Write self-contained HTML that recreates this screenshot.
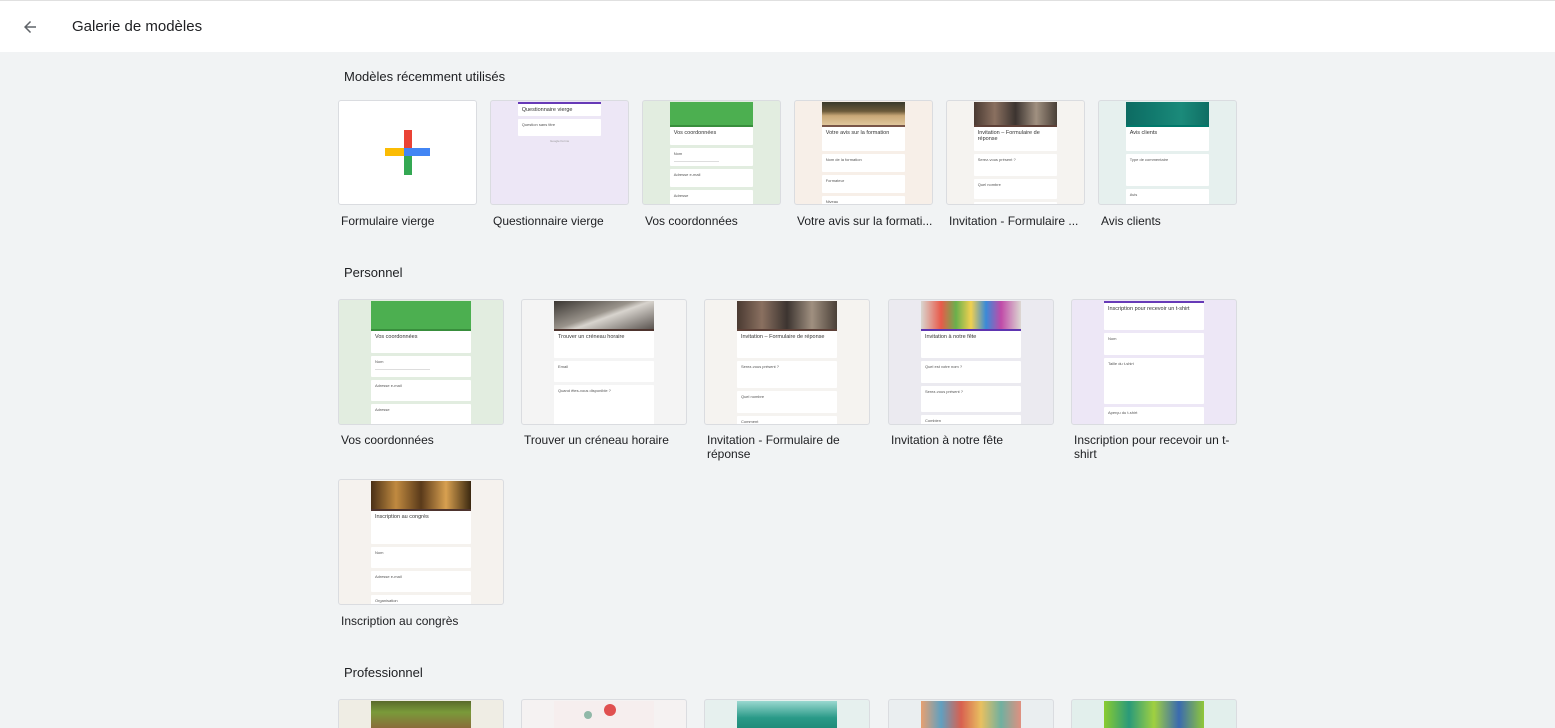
<!DOCTYPE html>
<html style="height:728px;overflow:hidden"><head><meta charset="utf-8"><style>
*{box-sizing:border-box;margin:0;padding:0}
body{width:1555px;height:728px;overflow:hidden;background:#f1f3f4;font-family:"Liberation Sans",Arial,sans-serif;color:#202124;position:relative}
.hdr{position:absolute;left:0;top:0;width:1555px;height:52px;background:#fff;border-top:1px solid #e0e0e0}
.hdr .t{position:absolute;left:72px;top:17px;font-size:15px;color:#202124}
.hdr svg{position:absolute;left:21px;top:17px}
h2{position:absolute;left:344px;font-size:13px;font-weight:400;color:#202124}
.c{position:absolute;border:1px solid #dadce0;border-radius:3px;overflow:hidden;background:#fff}
.r1{width:139px;height:105px;top:100px}
.r2{width:166px;height:126px}
.r3{width:166px;height:29px;top:699px;border-bottom:none;border-radius:3px 3px 0 0}
.lb{position:absolute;font-size:12px;line-height:14px;color:#202124}
.f{position:absolute;left:19.5%;width:61%;top:1px;bottom:0}
.im{width:100%}
.st{height:2px;width:100%}
.b{background:#fff;border-radius:1px;margin-bottom:3px;padding:3px 4px;font-size:4px;color:#555;overflow:hidden}
.tt{font-size:5.5px;color:#333;margin-bottom:2px}
.ln{height:1px;background:#ddd;width:60%;margin-top:5px}
</style></head><body>
<div class="hdr">
<svg width="18" height="18" viewBox="0 0 24 24"><path d="M20 11H7.83l5.59-5.59L12 4l-8 8 8 8 1.41-1.41L7.83 13H20v-2z" fill="#5f6368"/></svg>
<div class="t">Galerie de modèles</div></div>

<h2 style="top:69px">Modèles récemment utilisés</h2>

<div class="c r1" style="left:338px">
<div style="position:absolute;left:46px;top:47px;width:45px;height:8px;background:#fbbc04"></div>
<div style="position:absolute;left:65px;top:47px;width:26px;height:8px;background:#4285f4"></div>
<div style="position:absolute;left:65px;top:29px;width:8px;height:18px;background:#ea4335"></div>
<div style="position:absolute;left:65px;top:55px;width:8px;height:19px;background:#34a853"></div>
</div>
<div class="lb" style="left:341px;top:214px">Formulaire vierge</div>

<div class="c r1" style="left:490px;background:#ede7f6"><div class="f"><div class="st" style="background:#673ab7"></div><div class="b" style="height:12px"><div class="tt">Questionnaire vierge</div></div><div class="b" style="height:17px">Question sans titre</div><div style="font-size:3px;text-align:center;color:#999">Google Forms</div></div></div>
<div class="lb" style="left:493px;top:214px">Questionnaire vierge</div>

<div class="c r1" style="left:642px;background:#e2ede0"><div class="f"><div class="im" style="height:23px;background:#4caf50"></div><div class="st" style="background:#388e3c"></div><div class="b" style="height:18px"><div class="tt">Vos coordonnées</div></div><div class="b" style="height:18px">Nom<div class="ln"></div></div><div class="b" style="height:18px">Adresse e-mail</div><div class="b" style="height:18px">Adresse</div></div></div>
<div class="lb" style="left:645px;top:214px">Vos coordonnées</div>

<div class="c r1" style="left:794px;background:#f7efe8"><div class="f"><div class="im" style="height:23px;background:linear-gradient(180deg,#3a3a2c 0,#6b5a3a 40%,#c9a878 60%,#e0c79c 100%)"></div><div class="st" style="background:#795548"></div><div class="b" style="height:24px"><div class="tt">Votre avis sur la formation</div></div><div class="b" style="height:18px">Nom de la formation</div><div class="b" style="height:18px">Formateur</div><div class="b" style="height:18px">Niveau</div></div></div>
<div class="lb" style="left:797px;top:214px">Votre avis sur la formati...</div>

<div class="c r1" style="left:946px;background:#f5f3f0"><div class="f"><div class="im" style="height:23px;background:linear-gradient(90deg,#4a3a32,#8a7060,#3c3430,#a09080,#4a4038)"></div><div class="st" style="background:#5d4037"></div><div class="b" style="height:24px"><div class="tt">Invitation – Formulaire de réponse</div></div><div class="b" style="height:22px">Serez-vous présent ?</div><div class="b" style="height:20px">Quel nombre</div><div class="b" style="height:18px">Comment</div></div></div>
<div class="lb" style="left:949px;top:214px">Invitation - Formulaire ...</div>

<div class="c r1" style="left:1098px;background:#e6f0ee"><div class="f"><div class="im" style="height:23px;background:linear-gradient(90deg,#0d6b62,#127a6e,#1b8a7a,#0f6e64)"></div><div class="st" style="background:#00796b"></div><div class="b" style="height:24px"><div class="tt">Avis clients</div></div><div class="b" style="height:32px">Type de commentaire</div><div class="b" style="height:18px">Avis</div></div></div>
<div class="lb" style="left:1101px;top:214px">Avis clients</div>

<h2 style="top:265px">Personnel</h2>

<div class="c r2" style="left:338px;top:299px;background:#e2ede0"><div class="f"><div class="im" style="height:28px;background:#4caf50"></div><div class="st" style="background:#388e3c"></div><div class="b" style="height:22px"><div class="tt">Vos coordonnées</div></div><div class="b" style="height:21px">Nom<div class="ln"></div></div><div class="b" style="height:21px">Adresse e-mail</div><div class="b" style="height:21px">Adresse</div></div></div>
<div class="lb" style="left:341px;top:433px">Vos coordonnées</div>

<div class="c r2" style="left:521px;top:299px;background:#f4f4f4"><div class="f"><div class="im" style="height:28px;background:linear-gradient(160deg,#3a3632,#9a948c 45%,#d8d4ce 55%,#5a5450)"></div><div class="st" style="background:#4e342e"></div><div class="b" style="height:27px"><div class="tt">Trouver un créneau horaire</div></div><div class="b" style="height:21px">Email</div><div class="b" style="height:40px">Quand êtes-vous disponible ?</div></div></div>
<div class="lb" style="left:524px;top:433px">Trouver un créneau horaire</div>

<div class="c r2" style="left:704px;top:299px;background:#f5f3f0"><div class="f"><div class="im" style="height:28px;background:linear-gradient(90deg,#4a3a32,#8a7060,#3c3430,#a09080,#4a4038)"></div><div class="st" style="background:#5d4037"></div><div class="b" style="height:27px"><div class="tt">Invitation – Formulaire de réponse</div></div><div class="b" style="height:27px">Serez-vous présent ?</div><div class="b" style="height:22px">Quel nombre</div><div class="b" style="height:18px">Comment</div></div></div>
<div class="lb" style="left:707px;top:433px;width:150px">Invitation - Formulaire de réponse</div>

<div class="c r2" style="left:888px;top:299px;background:#ebeaf0"><div class="f"><div class="im" style="height:28px;background:linear-gradient(90deg,#d9d6d0,#e85a4a 20%,#6ab04c 35%,#f0d050 50%,#3a8ad8 65%,#c04aa8 80%,#dcd8d2)"></div><div class="st" style="background:#5e35b1"></div><div class="b" style="height:27px"><div class="tt">Invitation à notre fête</div></div><div class="b" style="height:22px">Quel est votre nom ?</div><div class="b" style="height:26px">Serez-vous présent ?</div><div class="b" style="height:18px">Combien</div></div></div>
<div class="lb" style="left:891px;top:433px">Invitation à notre fête</div>

<div class="c r2" style="left:1071px;top:299px;background:#ede7f6"><div class="f"><div class="st" style="background:#673ab7"></div><div class="b" style="height:27px"><div class="tt">Inscription pour recevoir un t-shirt</div></div><div class="b" style="height:22px">Nom</div><div class="b" style="height:46px">Taille du t-shirt</div><div class="b" style="height:30px;position:relative">Aperçu du t-shirt<div style="position:absolute;left:36px;bottom:0;width:30px;height:10px;background:#4a3f8c;border-radius:8px 8px 0 0"></div></div></div></div>
<div class="lb" style="left:1074px;top:433px;width:165px">Inscription pour recevoir un t-shirt</div>

<div class="c r2" style="left:338px;top:479px;background:#f5f2ee"><div class="f"><div class="im" style="height:28px;background:linear-gradient(90deg,#4a3016,#c08a40,#5a3a1a,#d8a050,#3a2810)"></div><div class="st" style="background:#4e342e"></div><div class="b" style="height:33px"><div class="tt">Inscription au congrès</div></div><div class="b" style="height:21px">Nom</div><div class="b" style="height:21px">Adresse e-mail</div><div class="b" style="height:21px">Organisation</div></div></div>
<div class="lb" style="left:341px;top:614px">Inscription au congrès</div>

<h2 style="top:665px">Professionnel</h2>

<div class="c r3" style="left:338px;background:#efede4"><div class="f"><div class="im" style="height:28px;background:linear-gradient(180deg,#5a6a2a,#7a9a3a 40%,#8a6a3a)"></div></div></div>
<div class="c r3" style="left:521px;background:#f5f2f2"><div class="f"><div class="im" style="height:28px;background:#f6eeee;position:relative"><div style="position:absolute;left:50px;top:3px;width:12px;height:12px;border-radius:50%;background:#e05050"></div><div style="position:absolute;left:30px;top:10px;width:8px;height:8px;border-radius:50%;background:#90b8a8"></div></div></div></div>
<div class="c r3" style="left:704px;background:#e6f0ee"><div class="f"><div class="im" style="height:28px;background:linear-gradient(180deg,#9ad8d0,#2a9a88 60%,#1f8a78)"></div></div></div>
<div class="c r3" style="left:888px;background:#eaeef0"><div class="f"><div class="im" style="height:28px;background:linear-gradient(90deg,#e8a070,#60a0c0,#d86050,#e8c060,#70b0a0,#e09080)"></div></div></div>
<div class="c r3" style="left:1071px;background:#e2efec"><div class="f"><div class="im" style="height:28px;background:linear-gradient(90deg,#8acc30,#2a9a7a,#a0d040,#3a6ab0,#90c838)"></div></div></div>
</body></html>
